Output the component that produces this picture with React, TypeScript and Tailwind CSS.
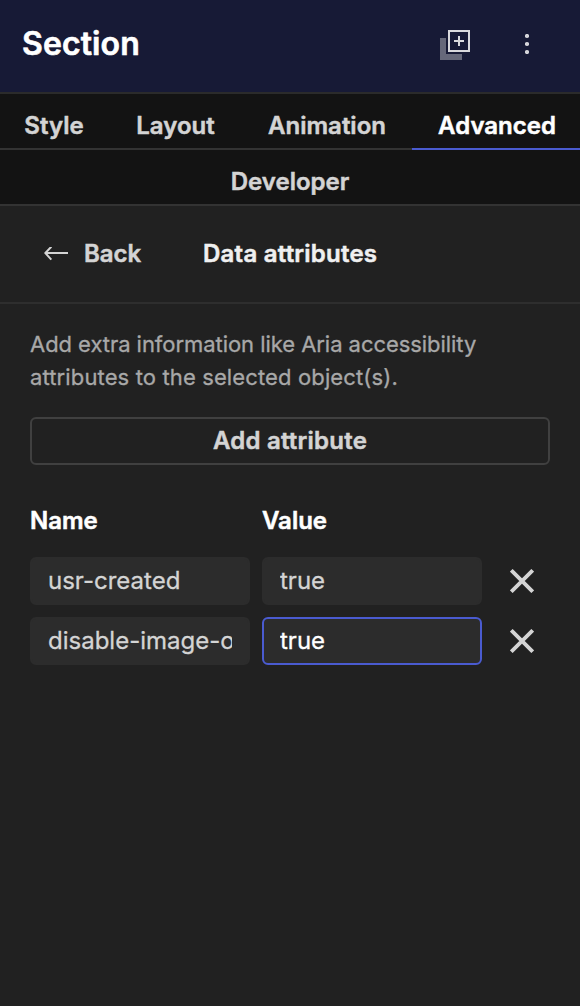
import { useState } from "react";
import clsx from "clsx";

type Attribute = {
  name: string;
  value: string;
};

const initialAttributes: Attribute[] = [
  { name: "usr-created", value: "true" },
  { name: "disable-image-optimization", value: "true" },
];

const tabs = [
  { label: "Style", className: "w-[108px]" },
  { label: "Layout", className: "w-[134px] pl-px" },
  { label: "Animation", className: "w-[170px]" },
  { label: "Advanced", className: "w-[168px]" },
];

function DuplicateIcon() {
  return (
    <svg width="30" height="30" viewBox="0 0 30 30" fill="none">
      <path d="M0 8H6V24H22V30H0Z" fill="#66687a" />
      <rect x="9" y="1" width="20" height="20" stroke="#d9d9dd" strokeWidth="2" />
      <path d="M19 6V16M14 11H24" stroke="#d9d9dd" strokeWidth="2" />
    </svg>
  );
}

function MoreIcon() {
  return (
    <svg width="4" height="20" viewBox="0 0 4 20" fill="#d5d5da">
      <circle cx="2" cy="2" r="2.1" />
      <circle cx="2" cy="10" r="2.1" />
      <circle cx="2" cy="18" r="2.1" />
    </svg>
  );
}

function BackIcon() {
  return (
    <svg width="24" height="14" viewBox="0 0 24 14" fill="none" stroke="#d4d4d4" strokeWidth="2">
      <path d="M24 6H1.5M7.3 -0.3L1.3 6L7.3 12.7" />
    </svg>
  );
}

function RemoveIcon() {
  return (
    <svg width="24" height="24" viewBox="0 0 24 24" fill="none" stroke="#d4d4d4" strokeWidth="3.8">
      <path d="M1.3 1.3L22.7 22.7M22.7 1.3L1.3 22.7" />
    </svg>
  );
}

export default function App() {
  const [attributes, setAttributes] = useState(initialAttributes);
  const [focused, setFocused] = useState(1);

  const update = (index: number, patch: Partial<Attribute>) => {
    setAttributes(attributes.map((a, i) => (i === index ? { ...a, ...patch } : a)));
  };

  return (
    <div className="h-[1006px] w-[580px] overflow-hidden bg-[#212121] font-['Inter',sans-serif] text-2xl text-[#d4d4d4] [-webkit-text-stroke:0.3px]">
      <header className="flex h-[94px] items-start border-b-2 border-[#2b2b2b] bg-[#171a36] pl-[22px]">
        <h1 className="mt-[23px] w-[418px] text-[32px] leading-[42px] font-semibold tracking-[0.1px] text-white [-webkit-text-stroke:0.6px]">
          Section
        </h1>
        <button className="mt-[30px]">
          <DuplicateIcon />
        </button>
        <button className="mt-[34px] ml-[55px]">
          <MoreIcon />
        </button>
      </header>

      <nav className="flex flex-wrap bg-[#131313] font-semibold [-webkit-text-stroke:0.5px]">
        {tabs.map((tab) => (
          <button
            key={tab.label}
            className={clsx(
              "h-14 border-b-2 pt-2.5 text-center",
              tab.className,
              tab.label === "Advanced" ? "border-[#4a5bd0] pl-0.5 text-white" : "border-[#333333]",
            )}
          >
            {tab.label}
          </button>
        ))}
        <button className="h-14 w-full border-b-2 border-[#333333] pt-2.5 text-center">Developer</button>
      </nav>

      <div className="flex h-[98px] items-center border-b-2 border-[#2e2e2e] pl-11 font-semibold [-webkit-text-stroke:0.5px]">
        <button className="flex w-[159px] items-center gap-4">
          <BackIcon />
          Back
        </button>
        <h2 className="tracking-[0.23px] text-[#f0f0f0]">Data attributes</h2>
      </div>

      <div className="px-[30px] pt-6">
        <p className="text-[22px] leading-[33px] text-[#a8a8a8]">
          <span className="tracking-[-0.05px]">Add extra information like Aria accessibility</span>
          <br />
          <span className="tracking-[0.13px]">attributes to the selected object(s).</span>
        </p>
        <button
          onClick={() => setAttributes([...attributes, { name: "", value: "" }])}
          className="mt-[23px] flex h-12 w-full items-center justify-center rounded-md border-2 border-[#404040] font-semibold tracking-[0.23px] [-webkit-text-stroke:0.5px]"
        >
          Add attribute
        </button>

        <div className="mt-10 flex gap-3 leading-8 font-semibold text-white [-webkit-text-stroke:0.5px]">
          <span className="w-[220px]">Name</span>
          <span>Value</span>
        </div>

        {/* attribute rows */}
        <div className="mt-5 flex flex-col gap-3">
          {attributes.map((attribute, index) => (
            <div key={index} className="flex items-center gap-3">
              <input
                value={attribute.name}
                onChange={(e) => update(index, { name: e.target.value })}
                className="h-12 w-[220px] rounded-md border-2 border-[#2c2c2c] bg-[#2c2c2c] px-4 pb-0.5 outline-none"
              />
              <input
                value={attribute.value}
                onFocus={() => setFocused(index)}
                onChange={(e) => update(index, { value: e.target.value })}
                className={clsx(
                  "h-12 w-[220px] rounded-md border-2 bg-[#2c2c2c] px-4 pb-0.5 outline-none",
                  focused === index ? "border-[#4a5bd0] text-white" : "border-[#2c2c2c]",
                )}
              />
              <button
                onClick={() => setAttributes(attributes.filter((_, i) => i !== index))}
                className="ml-4"
              >
                <RemoveIcon />
              </button>
            </div>
          ))}
        </div>
      </div>
    </div>
  );
}
